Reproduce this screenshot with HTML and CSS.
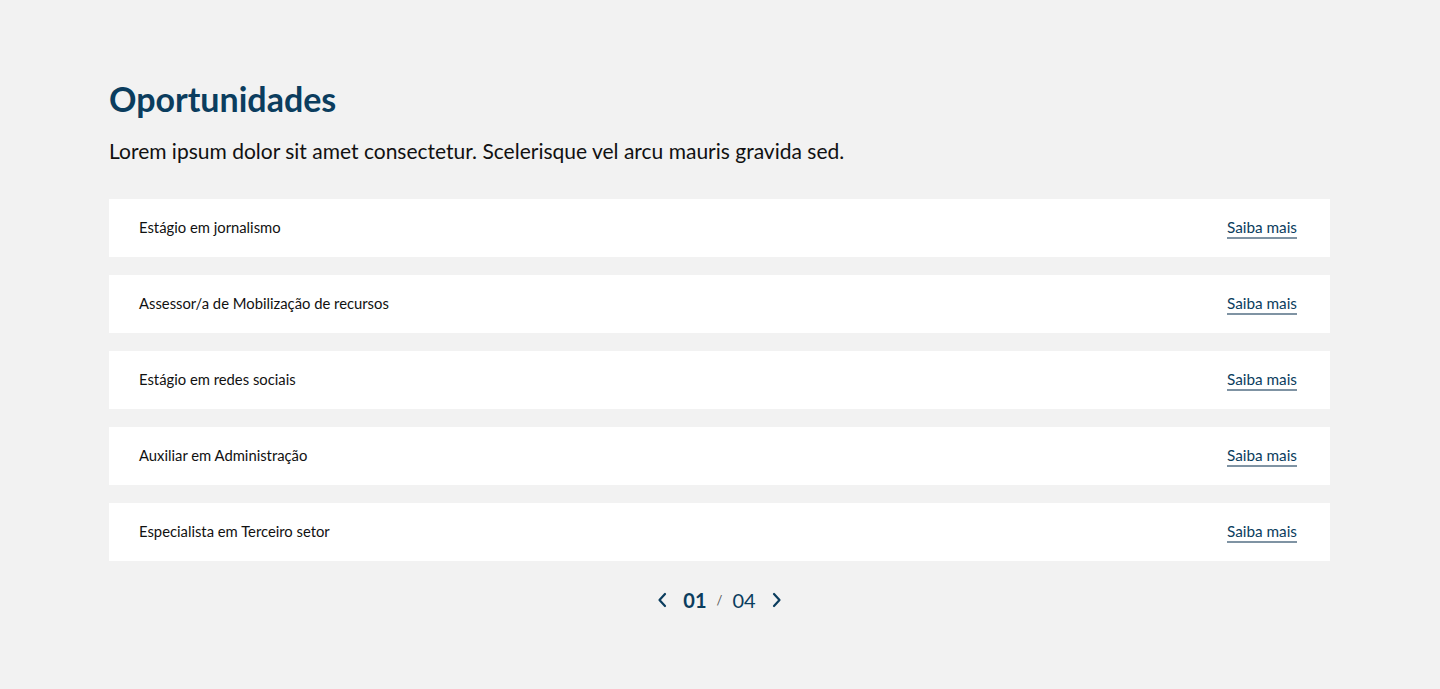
FILE: index.html
```html
<!DOCTYPE html>
<html lang="pt">
<head>
<meta charset="utf-8">
<link rel="stylesheet" href="styles.css">
</head>
<body>
<main class="section">
  <h1 class="title">Oportunidades</h1>
  <p class="lead">Lorem ipsum dolor sit amet consectetur. Scelerisque vel arcu mauris gravida sed.</p>
  <ul class="list">
    <li class="item"><span class="name">Estágio em jornalismo</span><a class="more" href="#">Saiba mais</a></li>
    <li class="item"><span class="name">Assessor/a de Mobilização de recursos</span><a class="more" href="#">Saiba mais</a></li>
    <li class="item"><span class="name">Estágio em redes sociais</span><a class="more" href="#">Saiba mais</a></li>
    <li class="item"><span class="name">Auxiliar em Administração</span><a class="more" href="#">Saiba mais</a></li>
    <li class="item"><span class="name">Especialista em Terceiro setor</span><a class="more" href="#">Saiba mais</a></li>
  </ul>
  <nav class="pager">
    <svg class="chev" width="10" height="16" viewBox="0 0 10 16"><path d="M8 2 L2.5 8 L8 14" fill="none" stroke="#0b3d5e" stroke-width="2.2" stroke-linecap="round" stroke-linejoin="round"/></svg>
    <span class="cur">01</span>
    <span class="sep">/</span>
    <span class="tot">04</span>
    <svg class="chev" width="10" height="16" viewBox="0 0 10 16"><path d="M2 2 L7.5 8 L2 14" fill="none" stroke="#0b3d5e" stroke-width="2.2" stroke-linecap="round" stroke-linejoin="round"/></svg>
  </nav>
</main>
</body>
</html>
```
FILE: styles.css
```css
html, body { margin: 0; padding: 0; }
body {
  background: #f2f2f2;
  font-family: Lato, "Noto Sans", sans-serif;
  color: #111;
}
.section {
  width: 1221px;
  margin: 0 0 0 109px;
  padding-top: 77px;
}
.title {
  margin: 0;
  font-size: 34px;
  line-height: 44px;
  font-weight: 700;
  color: #0b3d5e;
}
.lead {
  margin: 16px 0 0;
  font-size: 21px;
  line-height: 28px;
  color: #111;
}
.list {
  list-style: none;
  margin: 34px 0 0;
  padding: 0;
  display: flex;
  flex-direction: column;
  gap: 18px;
}
.item {
  background: #fff;
  height: 58px;
  display: flex;
  align-items: center;
  justify-content: space-between;
  padding: 0 33px 0 30px;
}
.name { font-size: 14.8px; color: #111; padding-bottom: 3px; }
.more {
  font-size: 15.3px;
  color: #0b3d5e;
  text-decoration: none;
  padding-bottom: 1px;
  border-bottom: 2px solid #7f93a3;
  margin-top: 0;
}
.pager {
  display: flex;
  justify-content: center;
  align-items: center;
  margin-top: 27px;
  color: #0b3d5e;
  font-size: 20px;
}
.chev { display: block; }
.cur { font-weight: 700; margin-left: 16px; }
.sep { font-size: 13px; margin: 0 10px; color: #555; }
.tot { margin-right: 16px; }
```
